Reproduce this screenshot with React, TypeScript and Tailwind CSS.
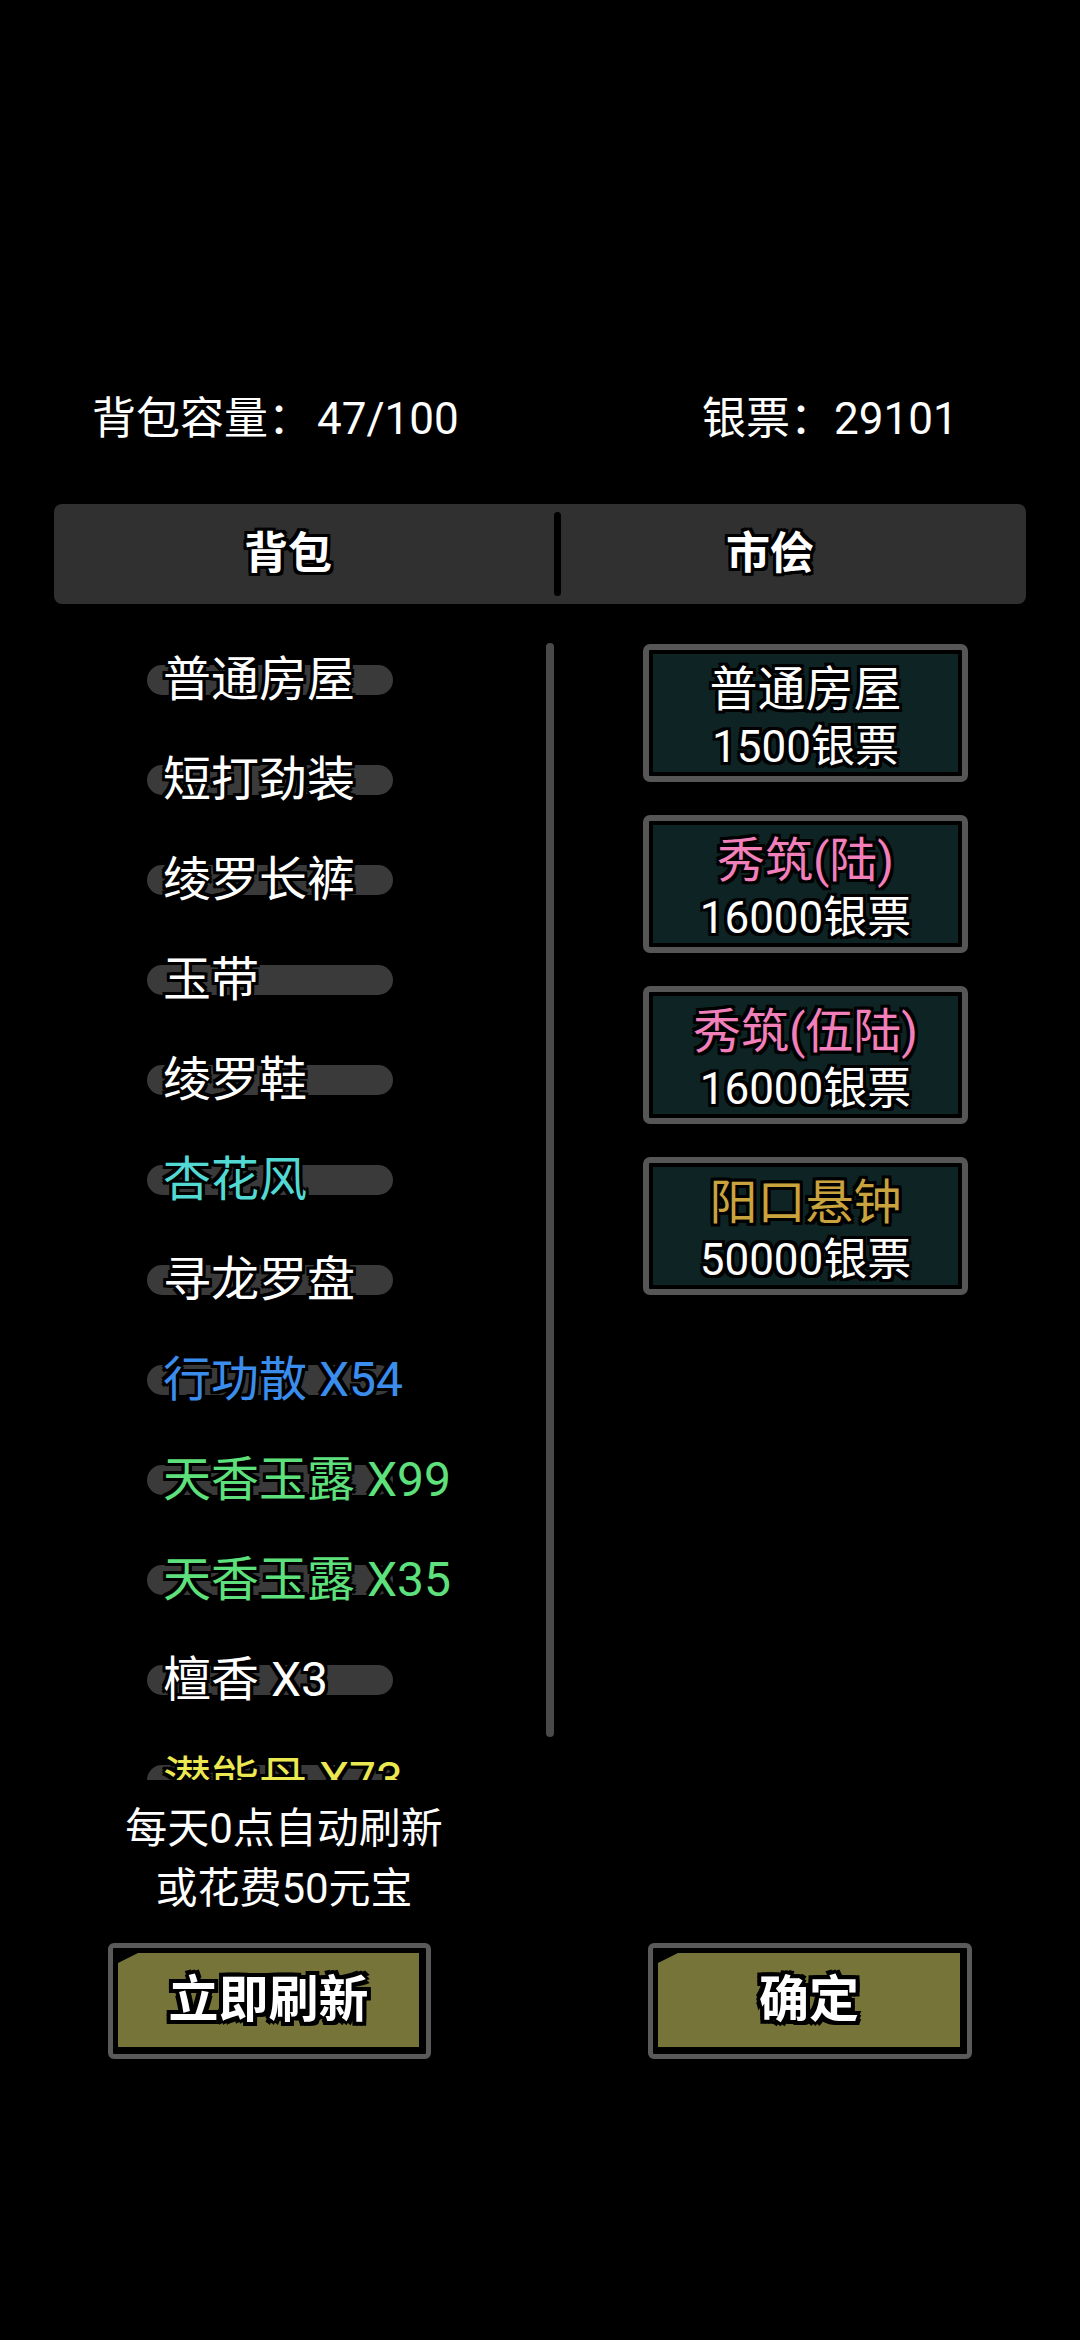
const OUTLINE3 =
  '[text-shadow:-3px_-3px_0_#000,0_-3px_0_#000,3px_-3px_0_#000,3px_0_0_#000,3px_3px_0_#000,0_3px_0_#000,-3px_3px_0_#000,-3px_0_0_#000]';
const OUTLINE4 =
  '[text-shadow:-4px_-4px_0_#000,0_-4px_0_#000,4px_-4px_0_#000,4px_0_0_#000,4px_4px_0_#000,0_4px_0_#000,-4px_4px_0_#000,-4px_0_0_#000]';

const bagItems: { name: string; color: string }[] = [
  { name: '普通房屋', color: 'text-white' },
  { name: '短打劲装', color: 'text-white' },
  { name: '绫罗长裤', color: 'text-white' },
  { name: '玉带', color: 'text-white' },
  { name: '绫罗鞋', color: 'text-white' },
  { name: '杏花风', color: 'text-[#52d9d3]' },
  { name: '寻龙罗盘', color: 'text-white' },
  { name: '行功散 X54', color: 'text-[#3b8ded]' },
  { name: '天香玉露 X99', color: 'text-[#5ee07c]' },
  { name: '天香玉露 X35', color: 'text-[#5ee07c]' },
  { name: '檀香 X3', color: 'text-white' },
  { name: '潜能丹 X73', color: 'text-[#ece852]' },
];

const marketItems: { name: string; price: string; color: string }[] = [
  { name: '普通房屋', price: '1500银票', color: 'text-white' },
  { name: '秀筑(陆)', price: '16000银票', color: 'text-[#f07fba]' },
  { name: '秀筑(伍陆)', price: '16000银票', color: 'text-[#f07fba]' },
  { name: '阳口悬钟', price: '50000银票', color: 'text-[#c9a33e]' },
];

function GameButton({ label, className }: { label: string; className: string }) {
  return (
    <div className={`h-[116px] rounded-[6px] border-[5px] border-[#5a5a5a] bg-black pt-[5px] pl-[5px] pr-[7px] pb-[7px] ${className}`}>
      <div className="h-full bg-[#77743a] [clip-path:polygon(20px_0,100%_0,100%_100%,0_100%,0_10px)] flex items-center justify-center">
        <span className={`text-[50px] font-bold text-white leading-none ${OUTLINE4}`}>{label}</span>
      </div>
    </div>
  );
}

export default function App() {
  return (
    <div className="w-[1080px] h-[2340px] bg-black text-white font-['Roboto','Noto_Sans_CJK_SC',sans-serif] flex flex-col">
      {/* Capacity / money */}
      <div className="mt-[392px] h-[54px] flex items-center text-[44px] leading-none">
        <span className="pl-[92px] w-[702px]">
          背包容量：<span className="ml-[5px]">47/100</span>
        </span>
        <span>银票：29101</span>
      </div>

      {/* Tabs */}
      <div className="mt-[58px] mx-[54px] h-[100px] rounded-[8px] bg-[#303030] flex">
        <div className={`w-[500px] pr-[32px] flex items-center justify-center text-[44px] font-bold ${OUTLINE3}`}>背包</div>
        <div className="w-[7px] h-[84px] self-center rounded-full bg-black" />
        <div className={`flex-1 pr-[47px] flex items-center justify-center text-[44px] font-bold ${OUTLINE3}`}>市侩</div>
      </div>

      {/* Content */}
      <div className="mt-[26px] h-[1150px] flex pl-[147px]">
        <div className="w-[399px] h-[1150px] overflow-hidden">
          {bagItems.map(item => (
            <div key={item.name} className="h-[100px] grid items-center">
              <div className="col-start-1 row-start-1 w-[246px] h-[30px] rounded-full bg-[#3a3a3a]" />
              <span className={`col-start-1 row-start-1 pl-[16px] text-[48px] leading-none whitespace-nowrap ${item.color} ${OUTLINE3}`}>
                {item.name}
              </span>
            </div>
          ))}
        </div>
        <div className="w-[8px] mt-[13px] h-[1094px] rounded-full bg-[#4a4a4a]" />
        <div className="ml-[89px] mt-[14px] w-[325px] flex flex-col gap-[33px]">
          {marketItems.map(item => (
            <div key={item.name} className="h-[138px] rounded-[7px] border-[6px] border-[#565656] bg-black p-[4px]">
              <div className="h-full bg-[#0e2323] flex flex-col items-center">
                <span className={`pt-[8px] text-[48px] leading-[56px] whitespace-nowrap ${item.color} ${OUTLINE3}`}>{item.name}</span>
                <span className={`text-[44px] leading-[58px] text-white whitespace-nowrap ${OUTLINE3}`}>{item.price}</span>
              </div>
            </div>
          ))}
        </div>
      </div>

      {/* Refresh note */}
      <div className="mt-[19px] ml-[54px] w-[460px] text-center text-[42px] leading-[60px]">
        <p>每天0点自动刷新</p>
        <p>或花费50元宝</p>
      </div>

      {/* Buttons */}
      <div className="mt-[24px] flex">
        <GameButton label="立即刷新" className="ml-[108px] w-[323px]" />
        <GameButton label="确定" className="ml-[217px] w-[324px]" />
      </div>
    </div>
  );
}
